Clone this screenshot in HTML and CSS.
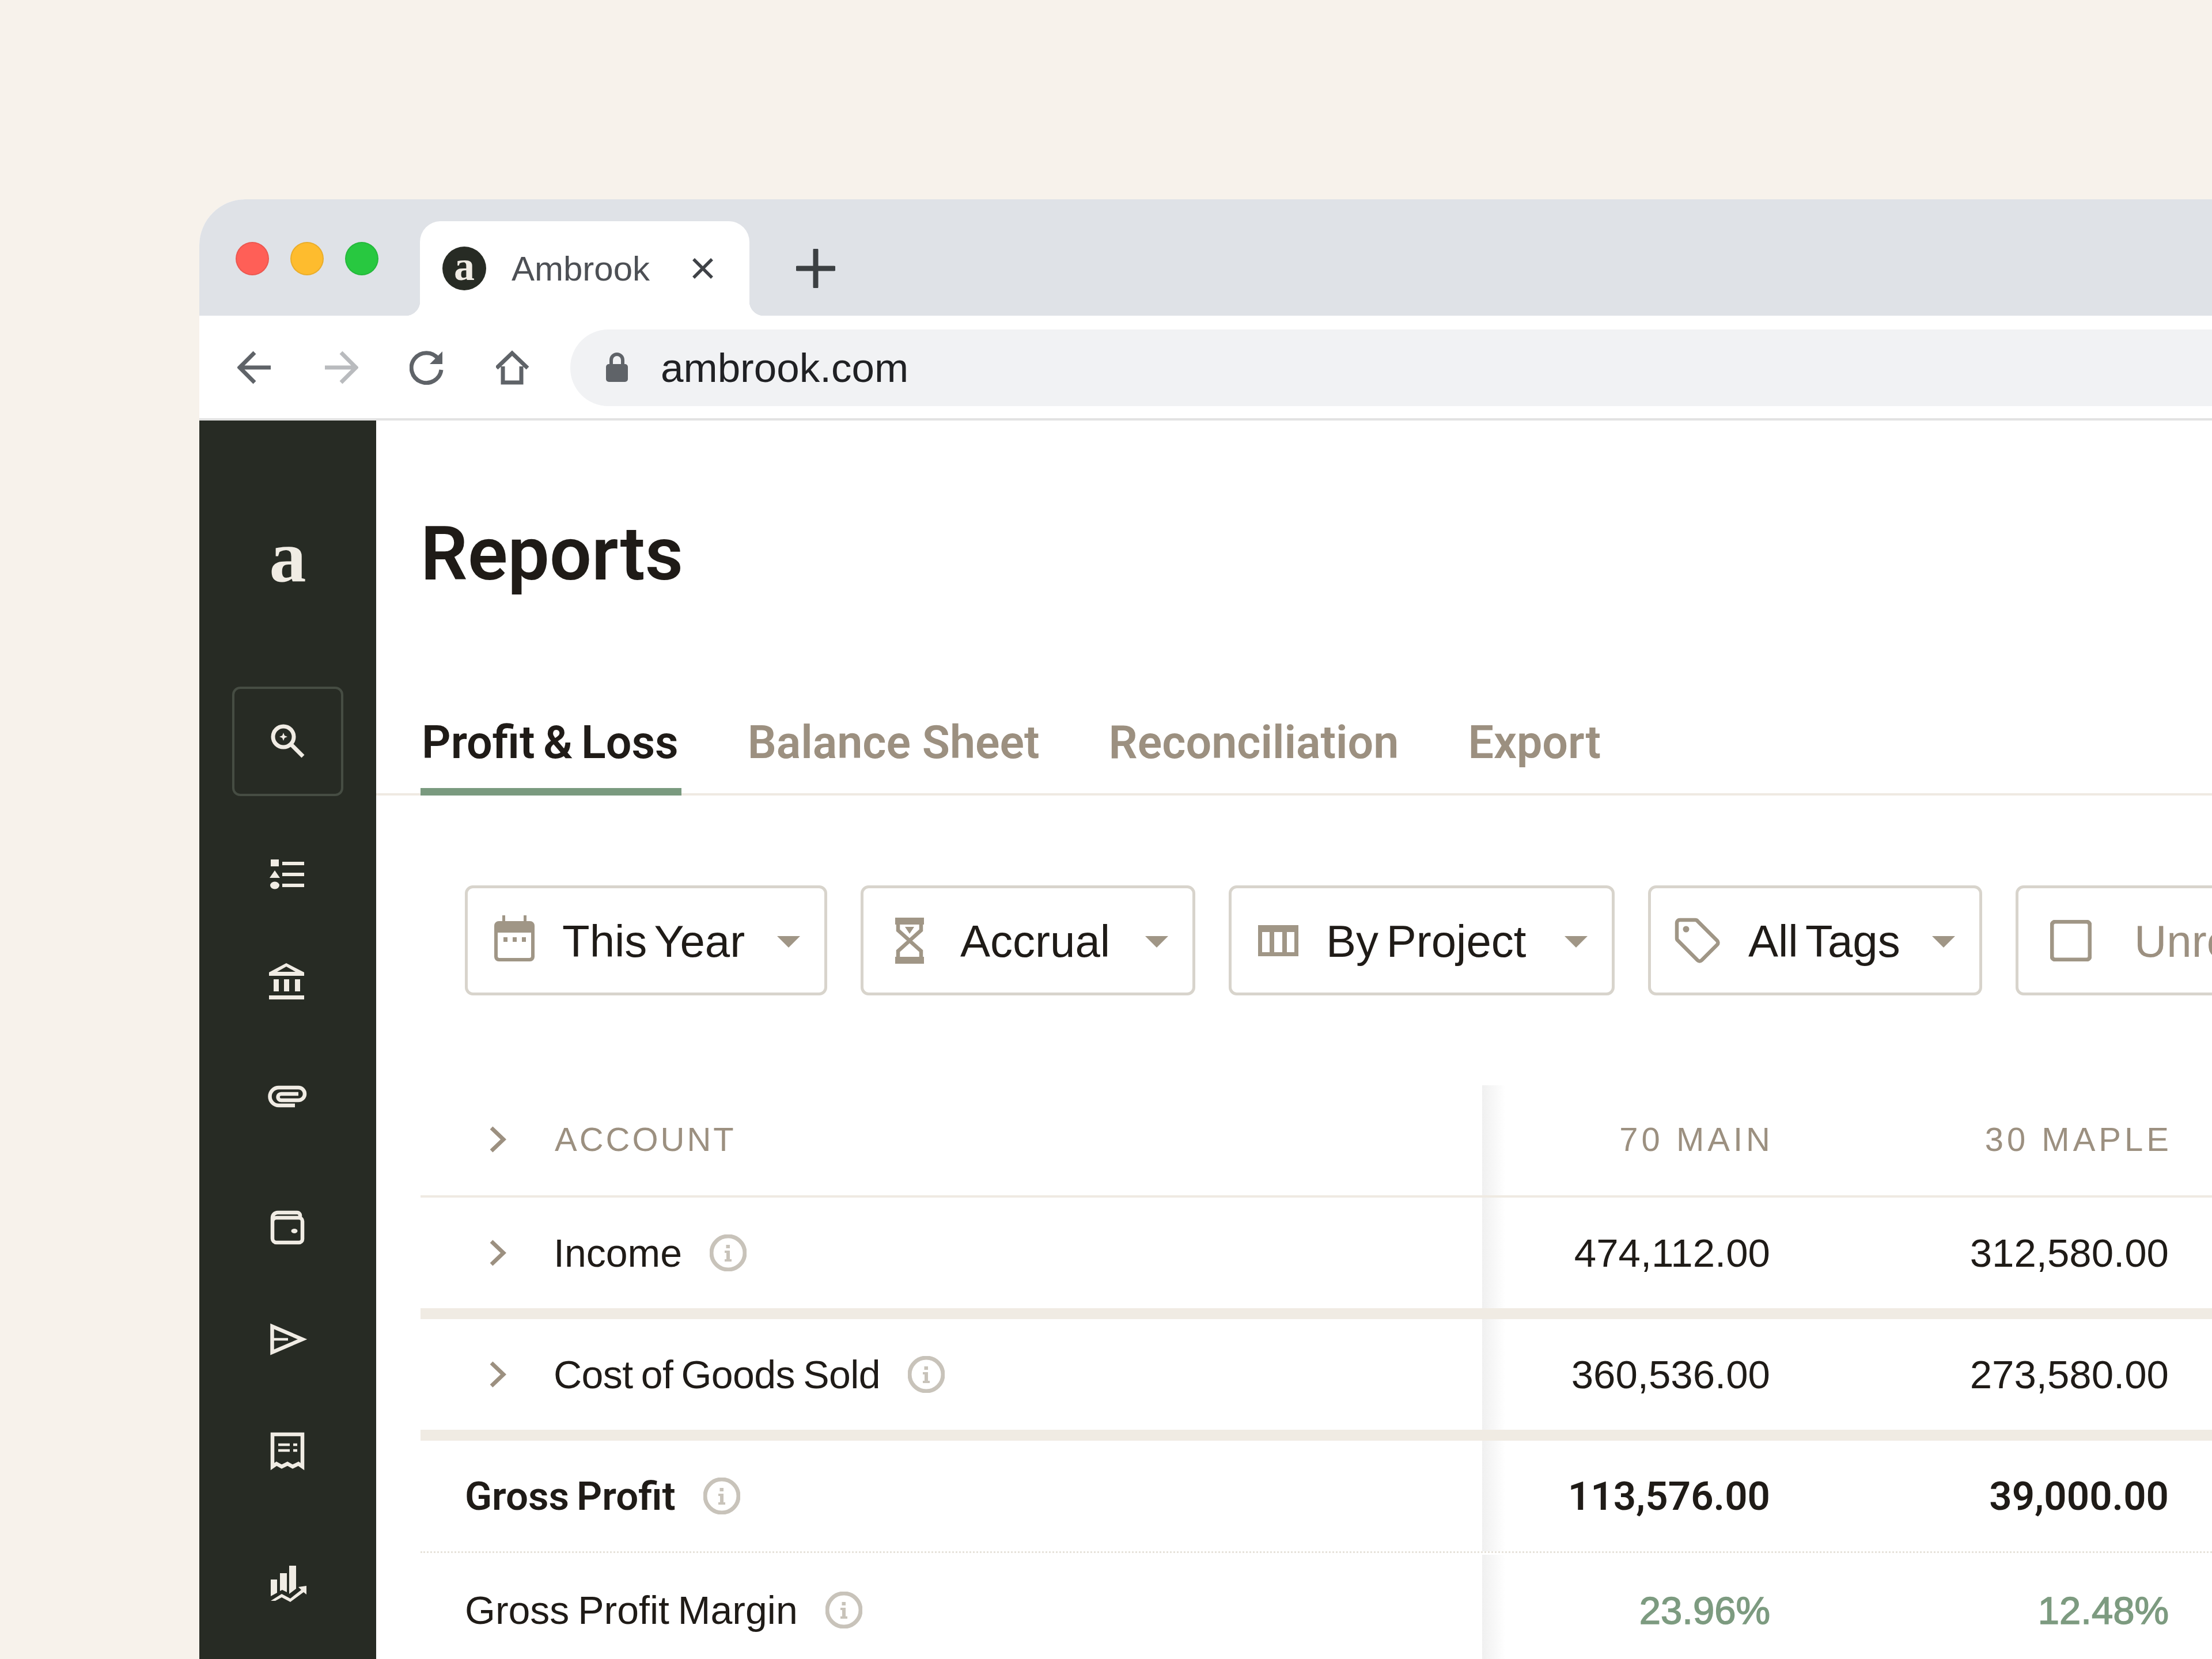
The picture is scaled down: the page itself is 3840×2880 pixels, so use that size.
FILE: index.html
```html
<!DOCTYPE html>
<html lang="en">
<head>
    <meta charset="UTF-8">
    <title>Ambrook - Reports</title>
    <link rel="stylesheet" href="styles.css">
</head>
<body>
<div class="window">
    <div class="tabstrip">
        <div class="lights">
            <span class="light red"></span>
            <span class="light yellow"></span>
            <span class="light green"></span>
        </div>
        <div class="tab">
            <span class="favicon">a</span>
            <span class="tab-title">Ambrook</span>
            <svg class="tab-close" viewBox="0 0 40 40"><path d="M4 4L36 36M36 4L4 36"/></svg>
        </div>
        <svg class="new-tab" viewBox="0 0 68 68"><path d="M34 2V66M2 34H66"/></svg>
    </div>

    <div class="toolbar">
        <svg class="nav-icon" viewBox="0 0 60 60"><path d="M58 30H5M30 4L4 30L30 56"/></svg>
        <svg class="nav-icon nav-off" viewBox="0 0 60 60"><path d="M2 30H55M30 4L56 30L30 56"/></svg>
        <svg class="nav-icon" viewBox="0 0 60 60"><path d="M50 15A26 26 0 1 0 55 34"/><path class="solid" d="M57 2V24H35Z"/></svg>
        <svg class="nav-icon" viewBox="0 0 60 60"><path d="M12 28V56H44V28M1 31L28 5L55 31"/></svg>
        <div class="urlbar">
            <svg class="lock" viewBox="0 0 40 52"><path class="lock-loop" d="M10 22V13A10 10 0 0 1 30 13V22"/><rect x="1" y="20" width="38" height="31" rx="5"/></svg>
            <span class="url">ambrook.com</span>
        </div>
    </div>

    <div class="app">
        <div class="sidebar">
            <div class="logo">a</div>
            <div class="side-group">
                <div class="side-item side-active">
                    <svg class="side-icon" viewBox="0 0 80 80"><circle cx="32" cy="32" r="18"/><path d="M45 45L66 66"/><path class="fill" d="M32 25L34 30L39 32L34 34L32 39L30 34L25 32L30 30Z"/></svg>
                </div>
            </div>
            <div class="side-group side-tools">
                <div class="side-item">
                    <svg class="side-icon" viewBox="0 0 80 80"><path class="fill" d="M10 14H24V26H10ZM17 33L26 46H8ZM30 18H68V24H30ZM30 37H68V43H30ZM30 56H68V62H30Z"/><ellipse class="fill" cx="17" cy="59" rx="8" ry="6.500"/></svg>
                </div>
                <div class="side-item">
                    <svg class="side-icon" viewBox="0 0 80 80"><path class="fill" d="M37 1L68 17V23H7V17ZM37 7L21 16H53ZM15 29H24V50H15ZM33 29H42V50H33ZM52 29H61V50H52ZM7 57H68V64H7Z" fill-rule="evenodd"/></svg>
                </div>
                <div class="side-item">
                    <svg class="side-icon thin" viewBox="0 0 80 80"><path d="M52 55H24A15.500 15.500 0 0 1 24 24H58A11 11 0 0 1 58 46H28A5.500 5.500 0 0 1 28 35H58"/></svg>
                </div>
            </div>
            <div class="side-group">
                <div class="side-item">
                    <svg class="side-icon thin" viewBox="0 0 80 80"><path d="M13 30V22A9 9 0 0 1 22 13H56A5 5 0 0 1 61 18V22H20A7 7 0 0 0 13 29V58A7 7 0 0 0 20 65H59A6 6 0 0 0 65 59V28A6 6 0 0 0 59 22"/><ellipse class="fill" cx="51" cy="45" rx="5.500" ry="4"/></svg>
                </div>
                <div class="side-item">
                    <svg class="side-icon thin" viewBox="0 0 80 80"><path d="M12.500 17.500L65 40L12.500 62.500Z"/><path class="hair" d="M14 40H40"/></svg>
                </div>
                <div class="side-item">
                    <svg class="side-icon thin" viewBox="0 0 80 80"><path d="M13 12H65V68L58 63L48 68L39 63L29 68L20 63L13 68Z"/><path class="hair" d="M23 30H43M23 40H43M49 30H56M49 40H56"/></svg>
                </div>
            </div>
            <div class="side-group">
                <div class="side-item">
                    <svg class="side-icon" viewBox="0 0 80 80"><path class="fill" d="M10 34H21V57L10 63ZM26 23H38V56L30 52L26 54ZM42 10H54V50L42 59ZM10 71L29 59L44 67L63 52L58 47L72 45L72 60L67 56L44 73L29 65L18 71Z"/></svg>
                </div>
            </div>
        </div>

        <div class="main">
            <h1 class="page-title">Reports</h1>

            <div class="page-tabs">
                <span class="page-tab current">Profit &amp; Loss</span>
                <span class="page-tab">Balance Sheet</span>
                <span class="page-tab">Reconciliation</span>
                <span class="page-tab">Export</span>
            </div>

            <div class="filters">
                <div class="filter filter-year">
                    <svg class="filter-icon icon-cal" viewBox="0 0 70 80"><path class="fill" d="M14 0H19V10H51V0H56V10H62A8 8 0 0 1 70 18V72A8 8 0 0 1 62 80H8A8 8 0 0 1 0 72V18A8 8 0 0 1 8 10H14ZM6 30V71A3 3 0 0 0 9 74H61A3 3 0 0 0 64 71V30Z" fill-rule="evenodd"/><path class="fill" d="M16 38H23V46H16ZM32 38H39V46H32ZM48 38H55V46H48Z"/></svg>
                    <span>This Year</span>
                    <span class="caret"></span>
                </div>
                <div class="filter filter-basis">
                    <svg class="filter-icon icon-glass" viewBox="0 0 50 80"><path class="fill" d="M0 0H50V12H0ZM0 68H50V80H0ZM17 16H33L25 28Z"/><path d="M5 10V22L25 40L45 22V10M5 70V58L25 40L45 58V70"/></svg>
                    <span>Accrual</span>
                    <span class="caret"></span>
                </div>
                <div class="filter filter-group">
                    <svg class="filter-icon icon-cols" viewBox="0 0 70 54"><path class="fill" d="M0 0H70V54H0ZM7 12V47H20V12ZM28 12V47H42V12ZM50 12V47H63V12Z" fill-rule="evenodd"/></svg>
                    <span>By Project</span>
                    <span class="caret"></span>
                </div>
                <div class="filter filter-tags">
                    <svg class="filter-icon icon-tag" viewBox="0 0 80 80"><path d="M4 9A5 5 0 0 1 9 4H36A5 5 0 0 1 40 6L74 40A5 5 0 0 1 74 47L47 74A5 5 0 0 1 40 74L6 40A5 5 0 0 1 4 36Z"/><circle class="fill" cx="20" cy="20" r="5.500"/></svg>
                    <span>All Tags</span>
                    <span class="caret"></span>
                </div>
                <div class="filter filter-check">
                    <svg class="filter-icon icon-check" viewBox="0 0 72 72"><rect x="3" y="3" width="66" height="66" rx="6"/></svg>
                    <span class="filter-muted">Unreconciled</span>
                </div>
            </div>

            <div class="report">
                <div class="row head">
                    <div class="name">
                        <svg class="chevron" viewBox="0 0 30 48"><path d="M4 4L25 24L4 44"/></svg>
                        <span>ACCOUNT</span>
                    </div>
                    <div class="num col-main">70 MAIN</div>
                    <div class="num">30 MAPLE</div>
                </div>
                <div class="row thick">
                    <div class="name">
                        <svg class="chevron" viewBox="0 0 30 48"><path d="M4 4L25 24L4 44"/></svg>
                        <span>Income</span>
                        <svg class="info" viewBox="0 0 64 64"><circle cx="32" cy="32" r="29"/><path class="info-i" d="M28.500 18H35V24H28.500ZM26 28H35V43H38V47H26V43H29V32H26Z"/></svg>
                    </div>
                    <div class="num col-main">474,112.00</div>
                    <div class="num">312,580.00</div>
                </div>
                <div class="row thick">
                    <div class="name">
                        <svg class="chevron" viewBox="0 0 30 48"><path d="M4 4L25 24L4 44"/></svg>
                        <span class="tight">Cost of Goods Sold</span>
                        <svg class="info" viewBox="0 0 64 64"><circle cx="32" cy="32" r="29"/><path class="info-i" d="M28.500 18H35V24H28.500ZM26 28H35V43H38V47H26V43H29V32H26Z"/></svg>
                    </div>
                    <div class="num col-main">360,536.00</div>
                    <div class="num">273,580.00</div>
                </div>
                <div class="row dotted strong">
                    <div class="name flat">
                        <span>Gross Profit</span>
                        <svg class="info" viewBox="0 0 64 64"><circle cx="32" cy="32" r="29"/><path class="info-i" d="M28.500 18H35V24H28.500ZM26 28H35V43H38V47H26V43H29V32H26Z"/></svg>
                    </div>
                    <div class="num col-main">113,576.00</div>
                    <div class="num">39,000.00</div>
                </div>
                <div class="row last">
                    <div class="name flat">
                        <span>Gross Profit Margin</span>
                        <svg class="info" viewBox="0 0 64 64"><circle cx="32" cy="32" r="29"/><path class="info-i" d="M28.500 18H35V24H28.500ZM26 28H35V43H38V47H26V43H29V32H26Z"/></svg>
                    </div>
                    <div class="num col-main good">23.96%</div>
                    <div class="num good">12.48%</div>
                </div>
            </div>
        </div>
    </div>
</div>
</body>
</html>
```

FILE: styles.css
```css
body {
    margin: 0;
    height: 2880px;
    overflow: hidden;
    background-color: #f7f2eb;
    font-family: "Liberation Sans", Arial, sans-serif;
    color: #1f1b17;
}

.window {
    margin: 346px 0 0 346px;
    height: 2534px;
    background-color: #fff;
    border-top-left-radius: 80px;
    overflow: hidden;
}

/* browser chrome */
.tabstrip {
    display: flex;
    height: 164px;
    padding-top: 38px;
    background-color: #dfe2e7;
}
.lights {
    display: flex;
    gap: 37px;
    margin: 36px 72px 0 63px;
}
.light {
    width: 58px;
    height: 58px;
    border-radius: 50%;
    box-sizing: border-box;
    border: 2px solid rgba(0, 0, 0, 0.08);
}
.red { background-color: #ff5f57; }
.yellow { background-color: #febc2e; }
.green { background-color: #28c840; }

.tab {
    position: relative;
    display: flex;
    align-items: center;
    width: 572px;
    box-sizing: border-box;
    padding: 0 0 0 39px;
    background-color: #fff;
    border-radius: 36px 36px 0 0;
}
.tab::before,
.tab::after {
    content: "";
    position: absolute;
    bottom: 0;
    width: 25px;
    height: 25px;
}
.tab::before {
    left: -25px;
    background: radial-gradient(circle at 0 0, transparent 25px, #fff 25.5px);
}
.tab::after {
    right: -25px;
    background: radial-gradient(circle at 100% 0, transparent 25px, #fff 25.5px);
}
.favicon {
    display: flex;
    align-items: center;
    justify-content: center;
    width: 76px;
    height: 76px;
    border-radius: 50%;
    background-color: #272b24;
    color: #f0ece4;
    font-family: "Liberation Serif", serif;
    font-weight: bold;
    font-size: 72px;
    line-height: 1;
    padding-bottom: 8px;
    box-sizing: border-box;
}
.tab-title {
    margin-left: 44px;
    width: 240px;
    font-size: 60px;
    color: #4d5055;
}
.tab-close {
    width: 40px;
    height: 40px;
    margin-left: 72px;
    fill: none;
    stroke: #3f4247;
    stroke-width: 5.500;
}
.new-tab {
    width: 68px;
    height: 68px;
    margin: 48px 0 0 81px;
    fill: none;
    stroke: #3c4043;
    stroke-width: 9;
    stroke-linecap: round;
}

.toolbar {
    display: flex;
    align-items: center;
    gap: 89.500px;
    height: 176px;
    padding: 2px 0 0 66px;
    background-color: #fff;
    border-bottom: 4px solid #e2e2e2;
}
.nav-icon {
    flex: none;
    width: 60px;
    height: 60px;
    fill: none;
    stroke: #5f6368;
    stroke-width: 7;
}
.nav-icon .solid {
    fill: #5f6368;
    stroke: none;
}
.nav-off {
    stroke: #b9bbbe;
}
.urlbar {
    display: flex;
    align-items: center;
    flex: 1;
    height: 133px;
    margin-left: -20px;
    padding-left: 61px;
    border-radius: 66px 0 0 66px;
    background-color: #f1f2f4;
}
.lock {
    width: 40px;
    height: 52px;
    fill: #5f6368;
}
.lock .lock-loop {
    fill: none;
    stroke: #5f6368;
    stroke-width: 6;
}
.url {
    margin-left: 56px;
    font-size: 71px;
    color: #202124;
}

/* app */
.app {
    display: flex;
    height: 2150px;
}
.sidebar {
    flex: none;
    width: 307px;
    background-color: #272b24;
}
.logo {
    display: flex;
    align-items: center;
    justify-content: center;
    height: 462px;
    padding-top: 10px;
    box-sizing: border-box;
    color: #f0ece4;
    font-family: "Liberation Serif", serif;
    font-weight: bold;
    font-size: 128px;
}
.side-group {
    margin-bottom: 37px;
}
.side-tools {
    margin-top: 39px;
    margin-bottom: 35px;
}
.side-item {
    display: flex;
    align-items: center;
    justify-content: center;
    height: 193px;
}
.side-active {
    width: 193px;
    height: 190px;
    margin: 0 0 3px 57px;
    box-sizing: border-box;
    border: 4px solid #464d43;
    border-radius: 14px;
}
.side-icon {
    width: 80px;
    height: 80px;
    fill: none;
    stroke: #f0ece4;
    stroke-width: 7;
}
.side-icon.thin {
    stroke-width: 6.500;
}
.side-icon .fill {
    fill: #f0ece4;
    stroke: none;
}
.side-icon .hair {
    stroke-width: 4.500;
}

.main {
    flex: 1;
    min-width: 0;
}
.page-title {
    margin: 0;
    height: 392px;
    padding: 159px 0 0 77px;
    box-sizing: border-box;
    font-family: Roboto, sans-serif;
    font-size: 129px;
    line-height: 146px;
    font-weight: 600;
    color: #1f1b17;
}
.page-tabs {
    display: flex;
    gap: 120px;
    height: 259px;
    padding-left: 79px;
    box-sizing: border-box;
    border-bottom: 4px solid #efeae2;
}
.page-tab {
    position: relative;
    padding-top: 122px;
    font-family: Roboto, sans-serif;
    font-size: 79px;
    line-height: 90px;
    font-weight: 600;
    color: #9c9080;
}
.current {
    color: #1f1b17;
    word-spacing: -5px;
}
.current::after {
    content: "";
    position: absolute;
    left: -2px;
    right: -5px;
    bottom: -4px;
    height: 13px;
    background-color: #7a9a7f;
}

.filters {
    display: flex;
    gap: 58px;
    margin-top: 156px;
    padding-left: 154px;
}
.filter {
    display: flex;
    align-items: center;
    flex: none;
    height: 191px;
    box-sizing: border-box;
    padding: 4px 0 0 46px;
    border: 5px solid #d8d4cc;
    border-radius: 14px;
    font-size: 78px;
    word-spacing: -8px;
}
.filter-year { width: 629px; }
.filter-basis { width: 581px; }
.filter-group { width: 670px; }
.filter-tags { width: 580px; padding-left: 41px; }
.filter-check { width: 600px; padding-left: 55px; }
.filter-icon {
    flex: none;
    margin-right: 48px;
    fill: none;
    stroke: #a09686;
    stroke-width: 6.500;
}
.filter-icon .fill {
    fill: #a09686;
    stroke: none;
}
.icon-cal { width: 70px; height: 80px; margin-bottom: 12px; }
.icon-glass { width: 50px; height: 80px; margin-left: 9px; margin-right: 63px; margin-bottom: 4px; }
.icon-cols { width: 70px; height: 54px; margin-bottom: 4px; }
.icon-tag { width: 80px; height: 80px; margin-bottom: 4px; }
.icon-check { width: 72px; height: 72px; margin-right: 74px; margin-bottom: 4px; stroke-width: 7; }
.caret {
    margin-left: auto;
    margin-right: 42px;
    border-left: 20px solid transparent;
    border-right: 20px solid transparent;
    border-top: 20px solid #a09686;
}
.filter-muted {
    color: #9c9080;
}

/* report table */
.report {
    margin: 152px 0 0 77px;
}
.row {
    display: grid;
    grid-template-columns: 1843px 500px 692px 200px;
    height: 192px;
    align-items: stretch;
    font-size: 69px;
}
.head {
    height: 195px;
    border-bottom: 4px solid #efeae2;
    font-size: 58px;
    letter-spacing: 6px;
    color: #9c9080;
}
.head .num {
    margin-right: -6px;
}
.head .col-main {
    margin-top: 4px;
    padding-bottom: 4px;
    height: 187px;
}
.thick {
    border-bottom: 19px solid #f0ebe3;
}
.dotted {
    border-bottom: 3px dotted #e6e2da;
}
.last {
    padding-top: 3px;
}
.name {
    display: flex;
    align-items: center;
    padding-left: 119px;
    font-size: 68px;
    word-spacing: -4px;
}
.head .name {
    font-size: 58px;
    letter-spacing: 4px;
    word-spacing: 0;
}
.head .chevron {
    margin-right: 84px;
}
.name.flat {
    padding-left: 77px;
}
.tight {
    letter-spacing: -0.6px;
}
.strong {
    font-family: Roboto, sans-serif;
    font-weight: 600;
}
.strong .name {
    font-size: 69px;
}
.num {
    display: flex;
    align-items: center;
    justify-content: flex-end;
}
.col-main {
    background-image: linear-gradient(to right, #f0f0f0, #fff 40px);
}
.good {
    font-size: 67px;
    color: #7d9b80;
    -webkit-text-stroke: 1.500px #7d9b80;
}
.chevron {
    flex: none;
    width: 30px;
    height: 48px;
    margin-right: 82px;
    fill: none;
    stroke: #9c9080;
    stroke-width: 7;
}
.info {
    flex: none;
    width: 64px;
    height: 64px;
    margin-left: 48px;
    fill: none;
    stroke: #c8c3ba;
    stroke-width: 7;
}
.info .info-i {
    fill: #c8c3ba;
    stroke: none;
}
```
